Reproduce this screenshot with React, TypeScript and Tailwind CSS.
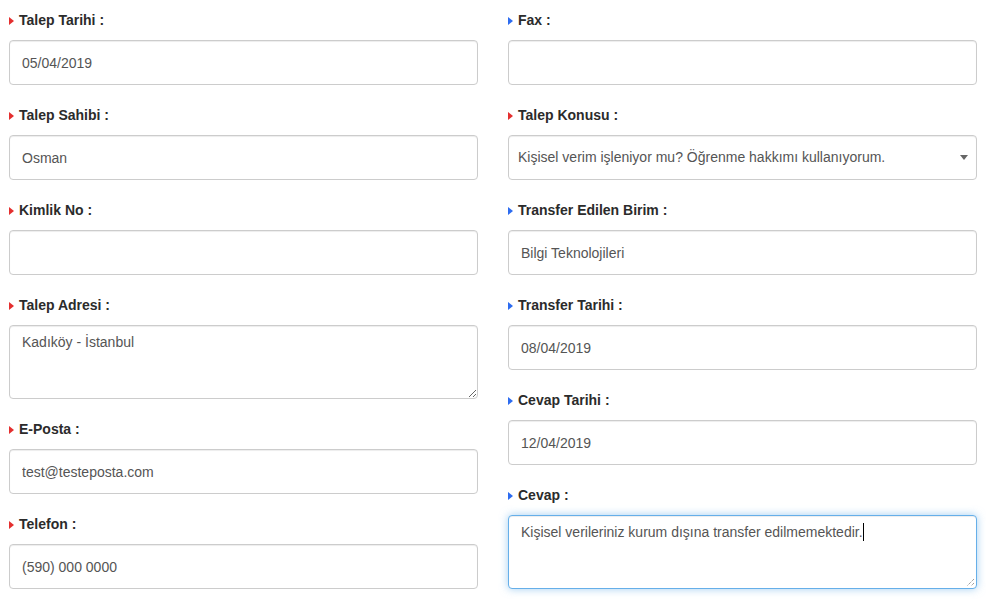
import React from "react";

type Color = "red" | "blue";

function Label({ text, color }: { text: string; color: Color }) {
  return (
    <div className="flex items-center h-[40px] pt-[1px]">
      <span
        className={
          "w-0 h-0 border-y-[4px] border-y-transparent border-l-[5px] mr-[5px] " +
          (color === "red" ? "border-l-[#e42f2f]" : "border-l-[#2d6cf0]")
        }
      />
      <span className="text-[14px] font-bold text-[#2b2b2b]">{text}</span>
    </div>
  );
}

const box =
  "w-full border border-[#cccccc] rounded-[4px] bg-white shadow-[inset_0_1px_1px_rgba(0,0,0,0.075)] text-[14px] text-[#555]";

function InputField({ label, color, value }: { label: string; color: Color; value: string }) {
  return (
    <div className="mb-[10px]">
      <Label text={label} color={color} />
      <input
        readOnly
        value={value}
        className={box + " h-[45px] px-[12px] outline-none"}
      />
    </div>
  );
}

function TextareaField({ label, color, value }: { label: string; color: Color; value: string }) {
  return (
    <div className="mb-[10px]">
      <Label text={label} color={color} />
      <textarea
        readOnly
        value={value}
        className={box + " block h-[74px] px-[12px] pt-[6px] leading-[20px] outline-none resize-y"}
      />
    </div>
  );
}

function SelectField({ label, color, value }: { label: string; color: Color; value: string }) {
  return (
    <div className="mb-[10px]">
      <Label text={label} color={color} />
      <div className={box + " h-[45px] pl-[9px] pr-[8px] flex items-center justify-between"}>
        <span>{value}</span>
        <span className="w-0 h-0 border-x-[4px] border-x-transparent border-t-[5px] border-t-[#666]" />
      </div>
    </div>
  );
}

function FocusedTextarea({ label, color, value }: { label: string; color: Color; value: string }) {
  return (
    <div className="mb-[10px]">
      <Label text={label} color={color} />
      <div className="relative w-full h-[74px] border border-[#66afe9] rounded-[4px] bg-white shadow-[inset_0_1px_1px_rgba(0,0,0,0.075),0_0_8px_rgba(102,175,233,0.6)] text-[14px] text-[#555] px-[12px] pt-[6px] leading-[20px]">
        <span>{value}</span>
        <span className="inline-block w-[1px] h-[18px] bg-black align-[-4px]" />
        <svg
          className="absolute right-[1px] bottom-[1px]"
          width="10"
          height="10"
          viewBox="0 0 10 10"
        >
          <line x1="9" y1="2" x2="2" y2="9" stroke="#777" strokeWidth="1" strokeDasharray="1 1" />
          <line x1="9" y1="6" x2="6" y2="9" stroke="#777" strokeWidth="1" strokeDasharray="1 1" />
        </svg>
      </div>
    </div>
  );
}

export default function App() {
  return (
    <div
      className="w-[986px] h-[606px] bg-white overflow-hidden px-[9px]"
      style={{ fontFamily: '"Liberation Sans", Arial, sans-serif' }}
    >
      <div className="grid grid-cols-[469px_469px] gap-x-[30px]">
        <div className="flex flex-col">
          <InputField label="Talep Tarihi :" color="red" value="05/04/2019" />
          <InputField label="Talep Sahibi :" color="red" value="Osman" />
          <InputField label="Kimlik No :" color="red" value="" />
          <TextareaField label="Talep Adresi :" color="red" value="Kadıköy - İstanbul" />
          <InputField label="E-Posta :" color="red" value="test@testeposta.com" />
          <InputField label="Telefon :" color="red" value="(590) 000 0000" />
        </div>
        <div className="flex flex-col">
          <InputField label="Fax :" color="blue" value="" />
          <SelectField
            label="Talep Konusu :"
            color="red"
            value="Kişisel verim işleniyor mu? Öğrenme hakkımı kullanıyorum."
          />
          <InputField label="Transfer Edilen Birim :" color="blue" value="Bilgi Teknolojileri" />
          <InputField label="Transfer Tarihi :" color="blue" value="08/04/2019" />
          <InputField label="Cevap Tarihi :" color="blue" value="12/04/2019" />
          <FocusedTextarea
            label="Cevap :"
            color="blue"
            value="Kişisel verileriniz kurum dışına transfer edilmemektedir."
          />
        </div>
      </div>
    </div>
  );
}
